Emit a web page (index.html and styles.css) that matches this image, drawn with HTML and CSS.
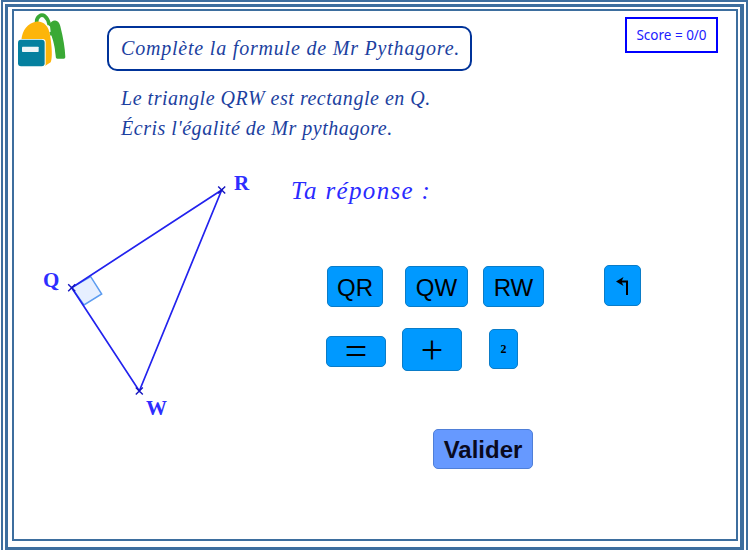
FILE: index.html
```html
<!DOCTYPE html>
<html lang="fr">

<head>
	<meta charset="UTF-8" />
	<title>Pythagore</title>
	<link rel="stylesheet" href="styles.css">
</head>

<body>
	<div class="frameOuter">
		<div class="frameMid">
			<div class="frameInner">

				<header class="top">
					<svg class="backpack" viewBox="54 40 147 165" aria-hidden="true">
						<path d="M110 70 C108 50 124 42 135 50 C142 56 146 64 148 76" fill="none" stroke="#3aa935" stroke-width="11" />
						<path d="M150 80 C160 62 172 64 176 80 C184 112 190 145 191 172 L172 172 C168 140 160 112 152 96" fill="#3aa935" stroke="#3aa935" stroke-width="10" stroke-linejoin="round" />
						<path d="M152 108 C160 130 164 155 164 176" fill="none" stroke="white" stroke-width="5" />
						<path d="M64 124 C66 90 84 70 108 66 C132 64 146 80 150 106 C156 140 158 176 152 188 L130 202 L70 130 Z" fill="#fdb50a" />
						<rect x="52" y="118" width="85" height="85" rx="10" fill="white" />
						<rect x="54" y="120" width="80" height="80" rx="9" fill="#04809f" />
						<rect x="66" y="141" width="50" height="16" rx="2" fill="#eef5f7" />
					</svg>
					<h1 class="task">Complète la formule de Mr Pythagore.</h1>
					<div class="score">Score = 0/0</div>
				</header>

				<p class="intro">Le triangle QRW est rectangle en Q.<br>Écris l'égalité de Mr pythagore.</p>

				<main class="work">
					<svg class="figure" width="265" height="260" viewBox="14 165 265 260">
						<polygon class="rightAngle" points="71.7,287.7 90.7,276.7 101.7,294 84,305" />
						<polygon class="side" points="221.7,190 71.7,287.7 139.3,391" />
						<path class="tick" d="M218.2 186.5l7 7m0-7l-7 7M68.2 284.2l7 7m0-7l-7 7M135.8 387.5l7 7m0-7l-7 7" />
						<text class="pointName" x="43" y="287">Q</text>
						<text class="pointName" x="234" y="190">R</text>
						<text class="pointName" x="146" y="415">W</text>
					</svg>

					<section class="answer">
						<h2 class="answerTitle">Ta réponse :</h2>

						<div class="keys keysNames">
							<button class="key keyQr">QR</button>
							<button class="key keyQw">QW</button>
							<button class="key keyRw">RW</button>
							<button class="key keyBack" aria-label="Effacer">
								<svg width="14" height="18" viewBox="0 0 14 18">
									<path d="M11 18V4.5H3" fill="none" stroke="#000" stroke-width="2" />
									<path d="M7.5 0L0 4.5L7.5 9L5.5 4.5Z" fill="#000" />
								</svg>
							</button>
						</div>

						<div class="keys keysOps">
							<button class="key keyEq">=</button>
							<button class="key keyPlus">+</button>
							<button class="key keySquare">2</button>
						</div>

						<button class="validate">Valider</button>
					</section>
				</main>

			</div>
		</div>
	</div>
</body>

</html>
```

FILE: styles.css
```css
html,
body {
	margin: 0;
	height: 550px;
	overflow: hidden;
	background: white;
}

/* nested border lines round the page */
.frameOuter {
	box-sizing: border-box;
	height: 550px;
	margin: 0 2px 0 1px;
	border: 2px solid #3d6e9e;
	border-bottom: 0;
	padding: 2px 2px 0;
}

.frameMid {
	box-sizing: border-box;
	height: 547px;
	border: solid #3d6e9e;
	border-width: 3px 4px 4px 3px;
	padding: 2px 2px 4px 4px;
}

.frameInner {
	box-sizing: border-box;
	height: 532px;
	border: 2px solid #3d6e9e;
}

.top {
	display: flex;
	align-items: flex-start;
	padding: 2px 18px 0 4px;
}

.backpack {
	width: 49px;
	height: 55px;
	flex: none;
}

.task {
	box-sizing: border-box;
	width: 365px;
	height: 45px;
	margin: 13px 0 0 40px;
	border: 2px solid #003399;
	border-radius: 10px;
	padding-left: 12px;
	font: italic 400 20px/41px "Liberation Serif", serif;
	letter-spacing: 0.8px;
	color: #1c3fa0;
	white-space: nowrap;
}

.score {
	box-sizing: border-box;
	width: 93px;
	height: 36px;
	margin: 4px 0 0 auto;
	border: 2px solid #0000ff;
	font: 13.5px/32px "Noto Sans", sans-serif;
	text-align: center;
	color: #2020ff;
}

.intro {
	margin: 12px 0 0 107px;
	font: italic 20px/30px "Liberation Serif", serif;
	letter-spacing: 0.52px;
	color: #1c3fa0;
}

.work {
	display: flex;
	margin-top: 22px;
}

.figure {
	flex: none;
}

.rightAngle {
	fill: #e6efff;
	stroke: #5c9cf0;
	stroke-width: 1.5;
}

.side {
	fill: none;
	stroke: #2222ee;
	stroke-width: 1.7;
}

.tick {
	fill: none;
	stroke: #1515c0;
	stroke-width: 1.4;
}

.pointName {
	font: bold 21px "Liberation Serif", serif;
	fill: #2e2eff;
}

.answerTitle {
	margin: 10px 0 0 12px;
	font: italic 400 25px/32px "Liberation Serif", serif;
	letter-spacing: 1.35px;
	color: #2a2aff;
}

.keys {
	display: flex;
	align-items: flex-start;
}

.keysNames {
	height: 42px;
	margin: 58px 0 0 48px;
}

.keysOps {
	height: 43px;
	margin: 21px 0 0 47px;
}

.key {
	box-sizing: border-box;
	border: 1px solid #0a7cc8;
	border-radius: 5px;
	padding: 2px 0 0;
	background: #0099ff;
	color: black;
	font: 24px "Liberation Sans", sans-serif;
}

.keyQr {
	width: 56px;
	height: 41px;
	margin-top: 1px;
}

.keyQw {
	width: 63px;
	height: 41px;
	margin: 1px 0 0 22px;
}

.keyRw {
	width: 61px;
	height: 41px;
	margin: 1px 0 0 15px;
}

.keyBack {
	width: 37px;
	height: 41px;
	margin-left: 60px;
	padding-top: 3px;
}

.keyEq {
	width: 60px;
	height: 31px;
	margin-top: 8px;
	padding: 0;
	font: 40px/26px "Liberation Serif", serif;
}

.keyPlus {
	width: 60px;
	height: 43px;
	margin-left: 16px;
	padding: 0;
	font: 40px/36px "Liberation Serif", serif;
}

.keySquare {
	width: 29px;
	height: 40px;
	margin: 1px 0 0 27px;
	padding: 0;
	font: bold 12px/38px "Liberation Serif", serif;
}

.validate {
	display: block;
	box-sizing: border-box;
	width: 100px;
	height: 40px;
	margin: 58px 0 0 154px;
	border: 1px solid #4f7fd8;
	border-radius: 5px;
	padding: 2px 0 0;
	background: #6699ff;
	color: #0a0a1e;
	font: bold 24px "Liberation Sans", sans-serif;
}
```
